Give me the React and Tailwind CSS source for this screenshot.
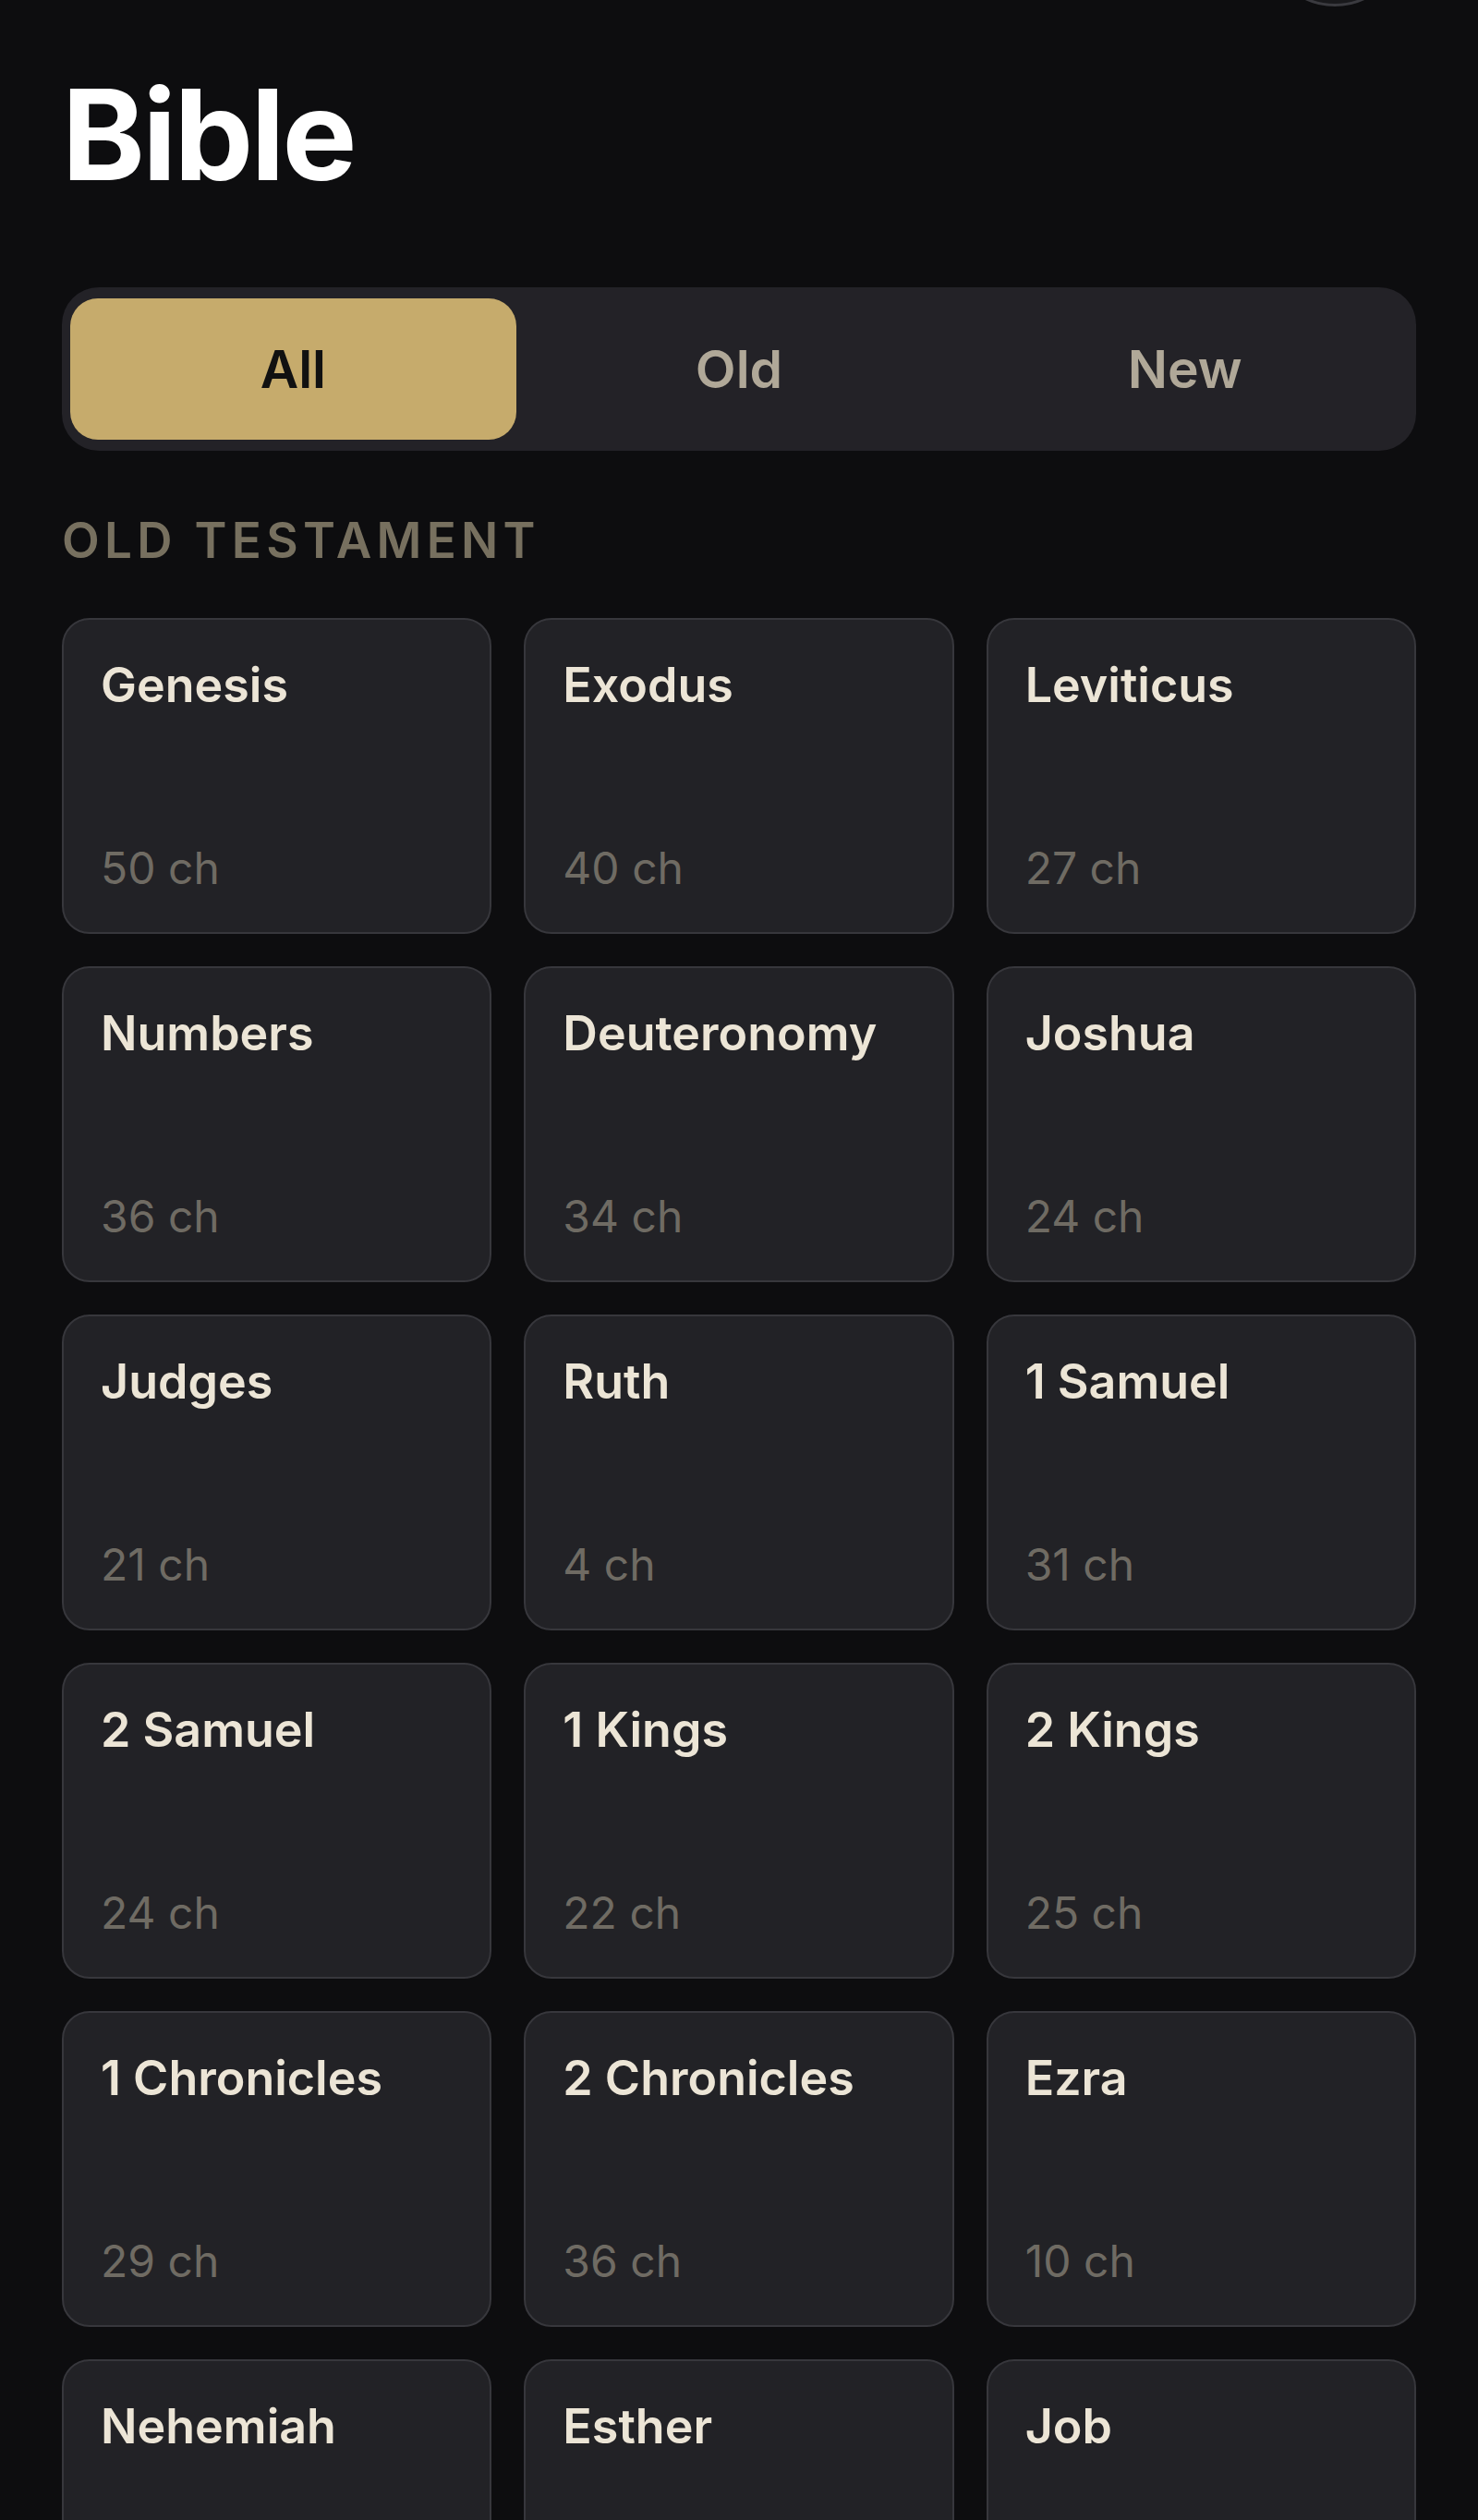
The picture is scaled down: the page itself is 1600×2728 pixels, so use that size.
import { useState } from 'react';

const OLD_BOOKS = [
  ['Genesis', 50], ['Exodus', 40], ['Leviticus', 27],
  ['Numbers', 36], ['Deuteronomy', 34], ['Joshua', 24],
  ['Judges', 21], ['Ruth', 4], ['1 Samuel', 31],
  ['2 Samuel', 24], ['1 Kings', 22], ['2 Kings', 25],
  ['1 Chronicles', 29], ['2 Chronicles', 36], ['Ezra', 10],
  ['Nehemiah', 13], ['Esther', 10], ['Job', 42],
];

const TABS = ['All', 'Old', 'New'];

function BookCard({ name, chapters }) {
  return (
    <div className="h-[342px] rounded-[30px] border-2 border-[#37373c] bg-[#222226] px-[40px] pt-[40px] pb-[40px] flex flex-col justify-between">
      <span className="text-[52px] leading-[1.2] font-semibold text-[#ece5d6]">{name}</span>
      <span className="text-[48px] leading-[1.2] font-normal text-[#6f6b63]">{chapters} ch</span>
    </div>
  );
}

export default function App() {
  const [tab, setTab] = useState('All');

  return (
    <div className="h-[2728px] overflow-hidden bg-[#0d0d0f] px-[67px] font-['Inter',sans-serif]">
      {/* header button, mostly scrolled off */}
      <div className="flex justify-end h-[7px]">
        <div className="-mt-[143px] mr-[13px] w-[150px] h-[150px] shrink-0 rounded-full border-[3px] border-[#3a3a3f] bg-[#19191c]" />
      </div>

      <h1 className="mt-[71px] text-[136px] leading-none font-bold tracking-[-0.02em] text-white">Bible</h1>

      {/* testament filter */}
      <div className="mt-[97px] h-[177px] rounded-[40px] bg-[#232227] px-[9px] py-[12px] grid grid-cols-3">
        {TABS.map((t) => (
          <button
            key={t}
            onClick={() => setTab(t)}
            className={`rounded-[30px] flex items-center justify-center text-[57px] leading-none font-semibold ${
              tab === t ? 'bg-[#c6ab6c] text-[#111111]' : 'text-[#b0a898]'
            }`}
          >
            {t}
          </button>
        ))}
      </div>

      <h2 className="mt-[71px] text-[53px] leading-none font-semibold tracking-[0.1em] text-[#77705f] uppercase">Old Testament</h2>

      <div className="mt-[57px] grid grid-cols-3 gap-[35px]">
        {OLD_BOOKS.map(([name, ch]) => (
          <BookCard key={name} name={name} chapters={ch} />
        ))}
      </div>
    </div>
  );
}
